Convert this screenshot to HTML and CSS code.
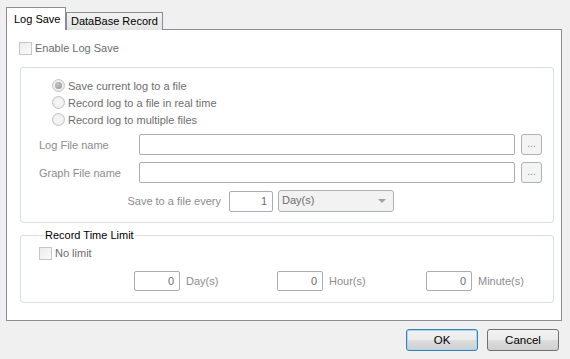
FILE: index.html
```html
<!DOCTYPE html>
<html lang="en">

<head>
    <meta charset="utf-8">
    <title>Log Save</title>
    <link rel="stylesheet" href="styles.css">
</head>

<body>
    <div class="dialog">
        <div class="tabs">
            <div class="tab active">Log Save</div>
            <div class="tab">DataBase Record</div>
        </div>

        <div class="panel">
            <label class="check top-check"><span class="box"></span>Enable Log Save</label>

            <div class="group options">
                <div class="radios">
                    <label class="radio"><span class="dot checked"></span>Save current log to a file</label>
                    <label class="radio"><span class="dot"></span>Record log to a file in real time</label>
                    <label class="radio"><span class="dot"></span>Record log to multiple files</label>
                </div>

                <div class="file-row">
                    <span class="field-label">Log File name</span>
                    <span class="text-box wide"></span>
                    <span class="browse">...</span>
                </div>
                <div class="file-row">
                    <span class="field-label">Graph File name</span>
                    <span class="text-box wide"></span>
                    <span class="browse">...</span>
                </div>

                <div class="every-row">
                    <span class="field-label">Save to a file every</span>
                    <span class="text-box num">1</span>
                    <span class="combo">Day(s)<span class="arrow"></span></span>
                </div>
            </div>

            <fieldset class="group limit">
                <legend>Record Time Limit</legend>
                <label class="check"><span class="box"></span>No limit</label>
                <div class="limit-row">
                    <span class="unit"><span class="text-box num">0</span>Day(s)</span>
                    <span class="unit"><span class="text-box num">0</span>Hour(s)</span>
                    <span class="unit"><span class="text-box num">0</span>Minute(s)</span>
                </div>
            </fieldset>
        </div>

        <div class="footer">
            <button class="btn default">OK</button>
            <button class="btn">Cancel</button>
        </div>
    </div>
</body>

</html>
```

FILE: styles.css
```css
* {
    margin: 0;
    padding: 0;
    box-sizing: border-box;
}

body {
    font-family: "Liberation Sans", Arial, sans-serif;
    font-size: 11px;
    background: #f0f0f0;
    color: #000;
    width: 570px;
    height: 359px;
    overflow: hidden;
}

.dialog {
    padding: 7px 8px 0 6px;
}

.tabs {
    display: flex;
    align-items: flex-end;
    height: 22px;
    position: relative;
    z-index: 1;
}

.tab {
    height: 18px;
    padding: 0 4px;
    line-height: 17px;
    border: 1px solid #898c95;
    border-bottom: none;
    background: linear-gradient(#f2f2f2, #e3e3e3);
    margin-bottom: -1px;
    margin-left: -1px;
}

.tab.active {
    width: 60px;
    height: 23px;
    padding: 3px 0 0 7px;
    background: #fff;
    margin-left: 0;
    margin-right: 1px;
}

.panel {
    height: 292px;
    border: 1px solid #898c95;
    background: #fff;
    padding: 11px 7px 0 13px;
}

.check {
    display: flex;
    align-items: center;
    gap: 3px;
    color: #6d6d6d;
    height: 14px;
}

.box {
    width: 13px;
    height: 13px;
    border: 1px solid #c6c6c6;
    background: linear-gradient(135deg, #ececec, #fafafa);
}

.top-check {
    margin-left: -1px;
}

.group {
    border: 1px solid #d5dfe5;
    border-radius: 3px;
}

.options {
    margin-top: 12px;
    height: 156px;
}

.radios {
    padding: 11px 0 0 31px;
    display: flex;
    flex-direction: column;
    gap: 4px;
}

.radio {
    display: flex;
    align-items: center;
    gap: 3px;
    color: #6d6d6d;
    height: 13px;
}

.dot {
    width: 13px;
    height: 13px;
    border-radius: 50%;
    border: 1px solid #c4c4c4;
    background: radial-gradient(circle, #f4f4f4 40%, #e2e2e2);
    display: flex;
    align-items: center;
    justify-content: center;
}

.dot.checked::after {
    content: "";
    width: 7px;
    height: 7px;
    border-radius: 50%;
    background: radial-gradient(circle at 40% 35%, #c8c8c8, #8e8e8e);
}

.file-row {
    display: flex;
    align-items: center;
    margin-top: 8px;
    padding-left: 18px;
}

.file-row + .file-row {
    margin-top: 7px;
}

.field-label {
    color: #8c8c8c;
}

.file-row .field-label {
    width: 100px;
}

.text-box {
    height: 21px;
    border: 1px solid #abadb3;
    border-radius: 2px;
    background: #fff;
    color: #6d6d6d;
}

.text-box.wide {
    width: 376px;
}

.text-box.num {
    width: 44px;
    text-align: right;
    padding-right: 5px;
    line-height: 19px;
}

.browse {
    width: 21px;
    height: 21px;
    margin-left: 6px;
    border: 1px solid #adb2b5;
    border-radius: 3px;
    background: #f4f4f4;
    color: #8c8c8c;
    text-align: center;
    line-height: 17px;
    font-size: 10px;
}

.every-row {
    display: flex;
    align-items: center;
    margin-top: 7px;
}

.every-row .field-label {
    width: 208px;
    text-align: right;
    padding-right: 8px;
}

.combo {
    position: relative;
    width: 116px;
    height: 22px;
    margin-left: 5px;
    border: 1px solid #adb2b5;
    border-radius: 3px;
    background: #f2f2f2;
    color: #6d6d6d;
    line-height: 19px;
    padding-left: 3px;
}

.arrow {
    position: absolute;
    right: 7px;
    top: 8px;
    border-left: 4px solid transparent;
    border-right: 4px solid transparent;
    border-top: 4px solid #a0a0a0;
}

.limit {
    margin-top: 6px;
    height: 74px;
    padding: 0 0 0 18px;
    min-inline-size: 0;
}

.limit legend {
    margin-left: 5px;
    padding: 0 1px;
    line-height: 13px;
}

.limit .check {
    margin-top: 4px;
}

.limit-row {
    display: flex;
    margin-top: 11px;
    padding-left: 95px;
}

.unit {
    display: flex;
    flex-shrink: 0;
    align-items: center;
    gap: 6px;
    color: #8c8c8c;
    width: 143px;
}

.unit + .unit {
    width: 149px;
}

.unit:last-child {
    width: auto;
}

.unit .text-box {
    width: 46px;
    height: 20px;
}

.footer {
    display: flex;
    justify-content: flex-end;
    gap: 9px;
    padding: 8px 3px 0 0;
}

.btn {
    width: 72px;
    height: 22px;
    font-family: "Liberation Sans", Arial, sans-serif;
    font-size: 11.5px;
    color: #000;
    border: 1px solid #707070;
    border-radius: 3px;
    background: linear-gradient(#f2f2f2 0%, #ebebeb 50%, #dddddd 51%, #cfcfcf 100%);
}

.btn.default {
    border-color: #3c7fb1;
    box-shadow: inset 0 0 0 1px #a6d8f6;
}
```
